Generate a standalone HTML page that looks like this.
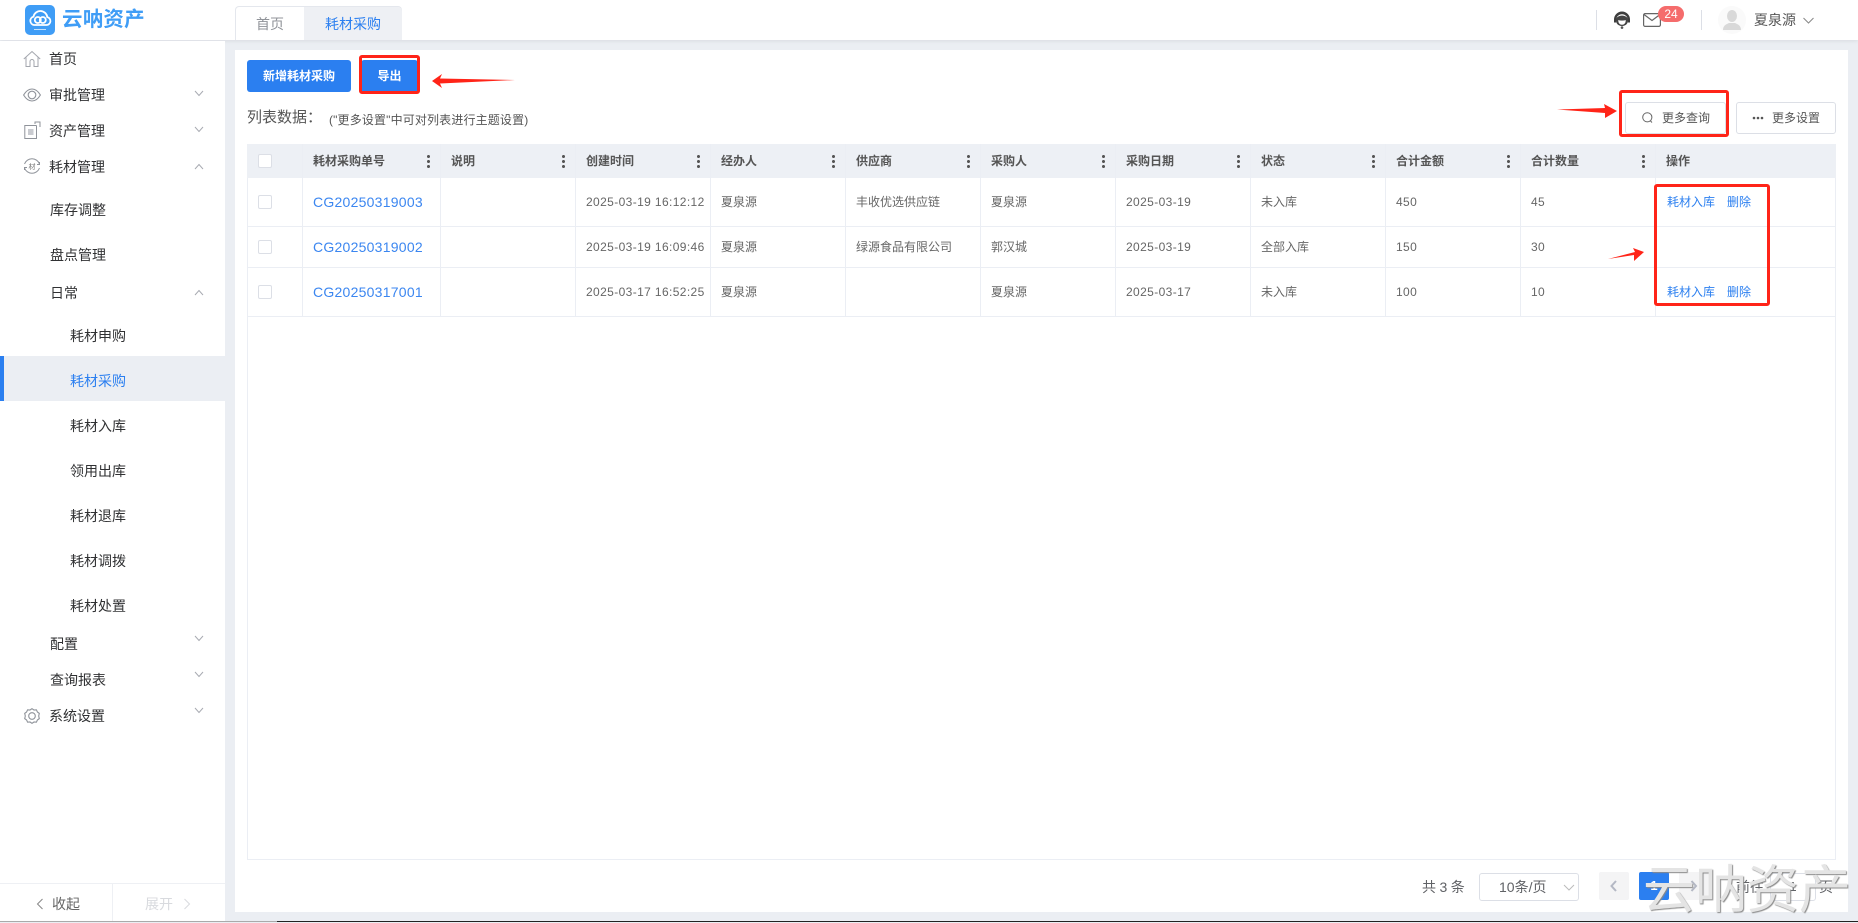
<!DOCTYPE html>
<html lang="zh-CN"><head><meta charset="utf-8"><title>云呐资产</title>
<style>
*{box-sizing:border-box}
html,body{margin:0;padding:0;width:1858px;height:922px;overflow:hidden;background:#ebeef3;font-family:"Liberation Sans","Noto Sans CJK SC",sans-serif;color:#333}
.a{position:absolute}
.t{position:absolute;white-space:nowrap;line-height:20px;height:20px}
.m{font-size:14px;color:#303133}
.h{font-size:12px;font-weight:700;color:#555;letter-spacing:0}
.c{font-size:12px;color:#666;letter-spacing:.38px}
.l{font-size:12px;color:#2b7ff0}
.code{font-size:14px;color:#3b86f0;letter-spacing:.25px}
.hl{position:absolute;background:#ebeef4;height:1px;left:247px;width:1589px}
.vl{position:absolute;background:#ebeef4;width:1px;top:144px;height:172px}
.cb{position:absolute;width:14px;height:14px;border:1px solid #dcdfe6;border-radius:2px;background:#fff;left:258px}
.dots{position:absolute;width:3px;height:13px;top:155px;background:radial-gradient(circle at 1.5px 1.5px,#555 1.4px,transparent 1.6px) 0 0/3px 5px repeat-y}
.red{position:absolute;border:3px solid #ff2418;border-radius:3px}
svg{position:absolute;overflow:visible}
</style></head><body>

<!-- header -->
<div class="a" style="left:0;top:0;width:1858px;height:40px;background:#fff;box-shadow:0 1px 4px rgba(0,0,0,.08)"></div>
<div class="a" style="left:25px;top:5px;width:30px;height:30px;background:#3f9df6;border-radius:5px"></div>
<svg style="left:25px;top:5px" width="30" height="30" viewBox="0 0 30 30" fill="none" stroke="#fff" stroke-width="1.800"><path d="M9 20h12.500a4 4 0 0 0 .8-7.900 7 7 0 0 0-13.800-.5A4.300 4.300 0 0 0 9 20z"/><circle cx="12.800" cy="15" r="3"/><circle cx="17.800" cy="15" r="3"/><path d="M9 24.500h12" stroke-width="1" opacity=".7"/></svg>
<div class="t" style="left:62px;top:10px;font-size:20.5px;font-weight:700;color:#3f9df6;letter-spacing:.2px">云呐资产</div>

<div class="a" style="left:235px;top:6px;width:167px;height:34px;border:1px solid #e4e7ed;border-bottom:0;border-radius:4px 4px 0 0;background:#fff"></div>
<div class="a" style="left:304px;top:7px;width:98px;height:33px;background:#eef0f4;border-radius:0 4px 0 0"></div>
<div class="t" style="left:256px;top:14px;font-size:14px;color:#909399">首页</div>
<div class="t" style="left:325px;top:14px;font-size:14px;color:#2b7ff0">耗材采购</div>

<div class="a" style="left:1596px;top:10px;width:1px;height:20px;background:#dcdfe6"></div>
<svg style="left:1613px;top:11px" width="18" height="18" viewBox="0 0 18 18"><path d="M9 .5a8 8 0 0 0-8 8v3h2.200V9a5.800 5.800 0 0 1 11.600 0v2.500H17v-3a8 8 0 0 0-8-8z" fill="#3d3d3d"/><path d="M3 8c1.500-4.500 10.500-4.500 12 0 .5 3.500-1.500 7-6 7s-6.500-3.500-6-7z" fill="#444"/><path d="M5.300 9c2 .8 5.400.8 7.400 0 .2 2.500-1 4.700-3.700 4.700S5.100 11.500 5.300 9z" fill="#fff"/><circle cx="9" cy="16.600" r="1.300" fill="#555"/></svg>
<svg style="left:1643px;top:13px" width="18" height="14" viewBox="0 0 18 14" fill="none" stroke="#666" stroke-width="1.200"><rect x=".6" y=".6" width="16.800" height="12.800" rx="1.500"/><path d="M1 1.500l8 6 8-6"/></svg>
<div class="a" style="left:1658px;top:6px;width:26px;height:16px;border-radius:8px;background:#f56c6c;color:#fff;font-size:12px;line-height:16px;text-align:center">24</div>
<div class="a" style="left:1701px;top:10px;width:1px;height:20px;background:#dcdfe6"></div>
<div class="a" style="left:1718px;top:6px;width:28px;height:28px;border-radius:50%;background:#fafafa"></div>
<svg style="left:1722px;top:9px" width="20" height="22" viewBox="0 0 20 22" fill="#d9d9d9"><ellipse cx="10" cy="7" rx="5" ry="6"/><path d="M1 21c0-5 4-6 6-7h6c2 1 6 2 6 7z"/></svg>
<div class="t" style="left:1754px;top:10px;font-size:14px;color:#555">夏泉源</div>
<svg style="left:1803px;top:17px" width="11" height="7" viewBox="0 0 11 7" fill="none" stroke="#888"><path d="M.5 1l5 5 5-5"/></svg>

<!-- sidebar -->
<div class="a" style="left:0;top:41px;width:225px;height:880px;background:#fff"></div>
<div class="a" style="left:0;top:356px;width:225px;height:45px;background:#ebeef3"></div>
<div class="a" style="left:0;top:356px;width:4px;height:45px;background:#2b7ff0"></div>

<svg style="left:23px;top:50px" width="18" height="18" viewBox="0 0 18 18" fill="none" stroke="#a3a6ad" stroke-width="1"><path d="M.8 9L9 1.500 17.200 9M3 7.500V16.500h4v-5a2 2 0 0 1 4 0v5h4V7.500"/></svg>
<svg style="left:23px;top:88px" width="18" height="14" viewBox="0 0 18 14" fill="none" stroke="#8f939a" stroke-width="1.100"><path d="M.6 7C3 3 6 1 9 1s6 2 8.400 6C15 11 12 13 9 13S3 11 .6 7z"/><circle cx="9" cy="7" r="3.800"/></svg>
<svg style="left:24px;top:121px" width="17" height="18" viewBox="0 0 17 18" fill="none" stroke="#8f939a" stroke-width="1"><path d="M12.500 4.500H.8v13h11.700V4.500"/><path d="M11 3V1h5v5"/><rect x="4" y="8" width="5.500" height="6" fill="#c9cbd0" stroke="none"/></svg>
<svg style="left:23px;top:157px" width="18" height="18" viewBox="0 0 18 18" fill="none" stroke="#8f939a" stroke-width="1"><path d="M1.500 7a8 8 0 0 1 15 0M16.500 11a8 8 0 0 1-15 0"/><path d="M16.500 5v2.500H14M1.500 13v-2.500H4"/><text x="9" y="12" font-size="7" fill="#777" stroke="none" text-anchor="middle" font-family="Liberation Sans,Noto Sans CJK SC,sans-serif">材</text></svg>
<svg style="left:24px;top:708px" width="16" height="16" viewBox="0 0 16 16" fill="none" stroke="#8f939a" stroke-width="1.100"><path d="M8 .7l2 1.300 2.400-.2 1 2.200 1.900 1.400-.6 2.600.6 2.600-1.900 1.400-1 2.200-2.400-.2-2 1.300-2-1.300-2.400.2-1-2.200L.7 10.600l.6-2.600-.6-2.600 1.900-1.400 1-2.200 2.400.2z"/><circle cx="8" cy="8" r="3.300"/></svg>

<div class="t m" style="left:49px;top:49px">首页</div>
<div class="t m" style="left:49px;top:85px">审批管理</div>
<div class="t m" style="left:49px;top:121px">资产管理</div>
<div class="t m" style="left:49px;top:157px">耗材管理</div>
<div class="t m" style="left:50px;top:200px">库存调整</div>
<div class="t m" style="left:50px;top:245px">盘点管理</div>
<div class="t m" style="left:50px;top:283px">日常</div>
<div class="t m" style="left:70px;top:326px">耗材申购</div>
<div class="t m" style="left:70px;top:371px;color:#2b7ff0">耗材采购</div>
<div class="t m" style="left:70px;top:416px">耗材入库</div>
<div class="t m" style="left:70px;top:461px">领用出库</div>
<div class="t m" style="left:70px;top:506px">耗材退库</div>
<div class="t m" style="left:70px;top:551px">耗材调拨</div>
<div class="t m" style="left:70px;top:596px">耗材处置</div>
<div class="t m" style="left:50px;top:634px">配置</div>
<div class="t m" style="left:50px;top:670px">查询报表</div>
<div class="t m" style="left:49px;top:706px">系统设置</div>

<svg style="left:0;top:0" width="225" height="922" fill="none" stroke="#a8abb2" stroke-width="1"><path d="M195 91l4 4.500 4-4.500M195 127l4 4.500 4-4.500M195 636l4 4.500 4-4.500M195 672l4 4.500 4-4.500M195 708l4 4.500 4-4.500M195 169l4-4.500 4 4.500M195 295l4-4.500 4 4.500"/></svg>

<div class="a" style="left:0;top:883px;width:225px;height:1px;background:#eef0f4"></div>
<div class="a" style="left:112px;top:883px;width:1px;height:38px;background:#eef0f4"></div>
<svg style="left:36px;top:898px" width="8" height="12" fill="none" stroke="#888"><path d="M6.500 1L1.500 6l5 5"/></svg>
<div class="t" style="left:52px;top:894px;font-size:14px;color:#666">收起</div>
<div class="t" style="left:145px;top:894px;font-size:14px;color:#d8dade">展开</div>
<svg style="left:183px;top:898px" width="8" height="12" fill="none" stroke="#d8dade"><path d="M1.500 1l5 5-5 5"/></svg>

<div class="a" style="left:0;top:921px;width:277px;height:1px;background:#aaa"></div>
<div class="a" style="left:277px;top:921px;width:1581px;height:1px;background:#222"></div>

<!-- panel -->
<div class="a" style="left:235px;top:50px;width:1613px;height:862px;background:#fff"></div>

<div class="a" style="left:247px;top:60px;width:104px;height:32px;background:#2b7ff0;border-radius:3px;color:#fff;font-size:12px;font-weight:700;line-height:32px;text-align:center">新增耗材采购</div>
<div class="a" style="left:361px;top:60px;width:57px;height:32px;background:#2b7ff0;border-radius:3px;color:#fff;font-size:12px;font-weight:700;line-height:32px;text-align:center">导出</div>
<div class="red" style="left:359px;top:55px;width:61px;height:39px"></div>
<svg style="left:0;top:0" width="1858" height="922"><polygon points="515,80 440,78.500 442,74 432,81 442,88 440,83.500" fill="#ff2418"/><polygon points="1557,109.500 1605,108 1604,104 1617,111 1605,118 1605,113" fill="#ff2418"/><polygon points="1608,259 1635,252 1633,248 1644,252 1634,261 1634,255" fill="#ff2418"/></svg>

<div class="t" style="left:247px;top:108px;font-size:15px;color:#555">列表数据：</div>
<div class="t" style="left:329px;top:110px;font-size:12px;color:#555;letter-spacing:.15px">("更多设置"中可对列表进行主题设置)</div>

<div class="a" style="left:1625px;top:102px;width:101px;height:32px;border:1px solid #dcdfe6;border-radius:3px;background:#fff"></div>
<svg style="left:1642px;top:112px" width="11" height="12" fill="none" stroke="#666"><circle cx="5.300" cy="5.300" r="4.600"/><path d="M8.500 9l1.500 1.500"/></svg>
<div class="t" style="left:1662px;top:108px;font-size:12px;color:#555">更多查询</div>
<div class="a" style="left:1736px;top:102px;width:100px;height:32px;border:1px solid #dcdfe6;border-radius:3px;background:#fff"></div>
<svg style="left:1752px;top:116px" width="12" height="4" fill="#555"><circle cx="2" cy="2" r="1.300"/><circle cx="6" cy="2" r="1.300"/><circle cx="10" cy="2" r="1.300"/></svg>
<div class="t" style="left:1772px;top:108px;font-size:12px;color:#555">更多设置</div>
<div class="red" style="left:1619px;top:90px;width:110px;height:47px"></div>

<!-- table -->
<div class="a" style="left:247px;top:144px;width:1589px;height:716px;border:1px solid #ebeef4"></div>
<div class="a" style="left:247px;top:144px;width:1589px;height:34px;background:#edf0f5"></div>
<div class="hl" style="top:226px"></div><div class="hl" style="top:267px"></div><div class="hl" style="top:316px"></div>
<div class="vl" style="left:302px"></div><div class="vl" style="left:440px"></div><div class="vl" style="left:575px"></div><div class="vl" style="left:710px"></div><div class="vl" style="left:845px"></div><div class="vl" style="left:980px"></div><div class="vl" style="left:1115px"></div><div class="vl" style="left:1250px"></div><div class="vl" style="left:1385px"></div><div class="vl" style="left:1520px"></div><div class="vl" style="left:1655px"></div>

<div class="cb" style="top:154px"></div><div class="cb" style="top:195px"></div><div class="cb" style="top:240px"></div><div class="cb" style="top:285px"></div>

<div class="t h" style="left:313px;top:151px">耗材采购单号</div>
<div class="t h" style="left:451px;top:151px">说明</div>
<div class="t h" style="left:586px;top:151px">创建时间</div>
<div class="t h" style="left:721px;top:151px">经办人</div>
<div class="t h" style="left:856px;top:151px">供应商</div>
<div class="t h" style="left:991px;top:151px">采购人</div>
<div class="t h" style="left:1126px;top:151px">采购日期</div>
<div class="t h" style="left:1261px;top:151px">状态</div>
<div class="t h" style="left:1396px;top:151px">合计金额</div>
<div class="t h" style="left:1531px;top:151px">合计数量</div>
<div class="t h" style="left:1666px;top:151px">操作</div>
<div class="dots" style="left:427px"></div><div class="dots" style="left:562px"></div><div class="dots" style="left:697px"></div><div class="dots" style="left:832px"></div><div class="dots" style="left:967px"></div><div class="dots" style="left:1102px"></div><div class="dots" style="left:1237px"></div><div class="dots" style="left:1372px"></div><div class="dots" style="left:1507px"></div><div class="dots" style="left:1642px"></div>

<div class="t code" style="left:313px;top:192px">CG20250319003</div>
<div class="t c" style="left:586px;top:192px">2025-03-19 16:12:12</div>
<div class="t c" style="left:721px;top:192px;letter-spacing:0">夏泉源</div>
<div class="t c" style="left:856px;top:192px;letter-spacing:0">丰收优选供应链</div>
<div class="t c" style="left:991px;top:192px;letter-spacing:0">夏泉源</div>
<div class="t c" style="left:1126px;top:192px">2025-03-19</div>
<div class="t c" style="left:1261px;top:192px;letter-spacing:0">未入库</div>
<div class="t c" style="left:1396px;top:192px">450</div>
<div class="t c" style="left:1531px;top:192px">45</div>
<div class="t l" style="left:1667px;top:192px">耗材入库</div>
<div class="t l" style="left:1727px;top:192px">删除</div>

<div class="t code" style="left:313px;top:237px">CG20250319002</div>
<div class="t c" style="left:586px;top:237px">2025-03-19 16:09:46</div>
<div class="t c" style="left:721px;top:237px;letter-spacing:0">夏泉源</div>
<div class="t c" style="left:856px;top:237px;letter-spacing:0">绿源食品有限公司</div>
<div class="t c" style="left:991px;top:237px;letter-spacing:0">郭汉城</div>
<div class="t c" style="left:1126px;top:237px">2025-03-19</div>
<div class="t c" style="left:1261px;top:237px;letter-spacing:0">全部入库</div>
<div class="t c" style="left:1396px;top:237px">150</div>
<div class="t c" style="left:1531px;top:237px">30</div>

<div class="t code" style="left:313px;top:282px">CG20250317001</div>
<div class="t c" style="left:586px;top:282px">2025-03-17 16:52:25</div>
<div class="t c" style="left:721px;top:282px;letter-spacing:0">夏泉源</div>
<div class="t c" style="left:991px;top:282px;letter-spacing:0">夏泉源</div>
<div class="t c" style="left:1126px;top:282px">2025-03-17</div>
<div class="t c" style="left:1261px;top:282px;letter-spacing:0">未入库</div>
<div class="t c" style="left:1396px;top:282px">100</div>
<div class="t c" style="left:1531px;top:282px">10</div>
<div class="t l" style="left:1667px;top:282px">耗材入库</div>
<div class="t l" style="left:1727px;top:282px">删除</div>
<div class="red" style="left:1654px;top:184px;width:116px;height:122px"></div>

<!-- pagination -->
<div class="t" style="left:1422px;top:877px;font-size:14px;color:#606266;letter-spacing:-.2px">共 3 条</div>
<div class="a" style="left:1479px;top:873px;width:100px;height:28px;border:1px solid #dcdfe6;border-radius:3px"></div>
<div class="t" style="left:1499px;top:877px;font-size:14px;color:#606266">10条/页</div>
<svg style="left:1563px;top:884px" width="12" height="7" fill="none" stroke="#bbb"><path d="M1 1l5 5 5-5"/></svg>
<div class="a" style="left:1599px;top:872px;width:30px;height:28px;background:#f4f4f5;border-radius:2px"></div>
<svg style="left:1610px;top:880px" width="8" height="12" fill="none" stroke="#b4b8c4" stroke-width="2"><path d="M6 1L1.500 6 6 11"/></svg>
<div class="a" style="left:1639px;top:872px;width:30px;height:28px;background:#2b7ff0;border-radius:2px;color:#fff;font-size:13px;font-weight:700;line-height:28px;text-align:center">1</div>
<div class="a" style="left:1679px;top:872px;width:30px;height:28px;background:#f4f4f5;border-radius:2px"></div>
<svg style="left:1690px;top:880px" width="8" height="12" fill="none" stroke="#b4b8c4" stroke-width="2"><path d="M1.500 1L6 6l-4.500 5"/></svg>
<div class="t" style="left:1736px;top:877px;font-size:14px;color:#606266">前往</div>
<div class="a" style="left:1770px;top:873px;width:46px;height:28px;border:1px solid #dcdfe6;border-radius:3px;font-size:13px;color:#606266;line-height:26px;text-align:center">1</div>
<div class="t" style="left:1819px;top:877px;font-size:14px;color:#606266">页</div>

<!-- watermark -->
<div class="t" style="left:1643px;top:856px;height:60px;line-height:60px;font-size:52px;color:#e4e4e4;text-shadow:1px 1px 1px #8a8a8a;font-family:'WenQuanYi Zen Hei','Noto Sans CJK SC',sans-serif">云呐资产</div>
</body></html>
